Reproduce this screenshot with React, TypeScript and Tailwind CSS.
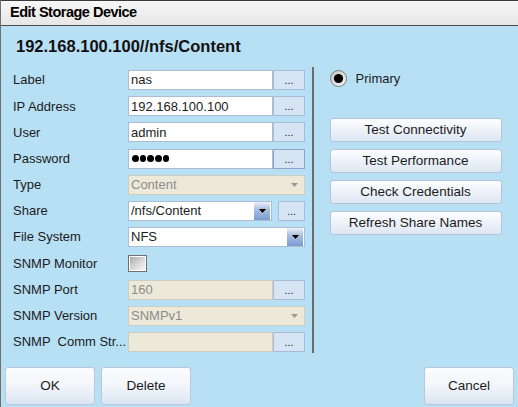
import React from 'react';

const FONT = "font-['Liberation_Sans',Arial,sans-serif]";

function Dots({ wide = 32, dark = false }: { wide?: number; dark?: boolean }) {
  return (
    <div
      className={`h-[20px] shrink-0 flex items-end justify-center pb-[3px] border bg-[#d7e4f3] text-[11px] leading-none text-[#222] ${
        dark ? 'border-[#8fa4c4]' : 'border-[#a9bbd6]'
      }`}
      style={{ width: wide }}
    >
      ...
    </div>
  );
}

function Arrow({ disabled = false }: { disabled?: boolean }) {
  if (disabled) {
    return (
      <svg width="7" height="4" viewBox="0 0 7 4" className="mr-[6px]">
        <path d="M0 0h7L3.5 4z" fill="#9a9a9a" />
      </svg>
    );
  }
  return (
    <div className="w-[16px] h-[18px] shrink-0 mr-px flex items-center justify-center bg-gradient-to-b from-[#edf2fa] via-[#a7bfe2] via-40% to-[#7b9dd2]">
      <svg width="9" height="6" viewBox="0 0 9 6">
        <path d="M0 0.5h9L4.5 5.5z" fill="#000" stroke="#fff" strokeWidth="0.6" />
      </svg>
    </div>
  );
}

function Row({ label, children }: { label: string; children: React.ReactNode }) {
  return (
    <div className="h-[26.2px] flex items-center">
      <div className="w-[115px] shrink-0 text-[13px] text-[#1b1b1b] whitespace-pre">{label}</div>
      <div className="flex items-center">{children}</div>
    </div>
  );
}

function TextBox({ value, disabled = false, width = 145 }: { value?: React.ReactNode; disabled?: boolean; width?: number }) {
  return (
    <div
      className={`h-[20px] shrink-0 flex items-center px-[2px] text-[13px] border ${
        disabled ? 'bg-[#ece9d9] border-[#cfcdc3] text-[#8c8c8c]' : 'bg-white border-[#abbcd4] text-[#1b1b1b]'
      }`}
      style={{ width }}
    >
      {value}
    </div>
  );
}

function Combo({ value, disabled = false, width }: { value: string; disabled?: boolean; width: number }) {
  return (
    <div
      className={`h-[20px] shrink-0 flex items-center justify-between pl-[2px] text-[13px] border ${
        disabled ? 'bg-[#ece9d9] border-[#cfcdc3] text-[#8c8c8c]' : 'bg-white border-[#abbcd4] text-[#1b1b1b]'
      }`}
      style={{ width }}
    >
      <span>{value}</span>
      <Arrow disabled={disabled} />
    </div>
  );
}

function SideButton({ children }: { children: string }) {
  return (
    <button className="h-[24px] w-[172px] rounded-[3px] border border-[#b7c4d8] bg-gradient-to-b from-[#fdfeff] to-[#dde6f3] text-[13.5px] text-[#1b1b1b]">
      {children}
    </button>
  );
}

function BigButton({ children }: { children: string }) {
  return (
    <button className="h-[38px] w-[90px] rounded-[3px] border border-[#bcc6d6] bg-gradient-to-b from-[#fbfcfe] via-[#f2f5fa] to-[#dbe5f3] text-[13.5px] text-[#1b1b1b]">
      {children}
    </button>
  );
}

export default function App() {
  return (
    <div className={`w-[518px] h-[407px] flex flex-col bg-[#b8e0f5] border-l border-[#6f6f6f] overflow-hidden ${FONT}`}>
      <div className="h-[26px] shrink-0 flex items-center pl-[9px] border-t border-t-[#3a3a3a] border-b border-b-[#4c4c4c] bg-gradient-to-b from-[#f7f7f7] to-[#e7e7e7] text-[14.5px] tracking-[-0.5px] font-bold text-black">
        Edit Storage Device
      </div>
      <div className="h-[41px] shrink-0 flex items-center pl-[15px] text-[16.5px] font-bold text-[#111]">
        192.168.100.100//nfs/Content
      </div>

      <div className="flex shrink-0">
        <div className="pl-[12px] w-[311px] shrink-0">
          <Row label="Label">
            <TextBox value="nas" />
            <Dots />
          </Row>
          <Row label="IP Address">
            <TextBox value="192.168.100.100" />
            <Dots />
          </Row>
          <Row label="User">
            <TextBox value="admin" />
            <Dots />
          </Row>
          <Row label="Password">
            <TextBox
              value={
                <span className="flex gap-[1.2px] pl-[1px]">
                  {[0, 1, 2, 3, 4].map((i) => (
                    <span key={i} className="w-[6.5px] h-[6.5px] rounded-full bg-black" />
                  ))}
                </span>
              }
            />
            <Dots dark />
          </Row>
          <Row label="Type">
            <Combo value="Content" disabled width={177} />
          </Row>
          <Row label="Share">
            <Combo value="/nfs/Content" width={144} />
            <div className="ml-[6px]">
              <Dots wide={27} />
            </div>
          </Row>
          <Row label="File System">
            <Combo value="NFS" width={177} />
          </Row>
          <Row label="SNMP Monitor">
            <div className="w-[19px] h-[17px] border border-[#6f6f6f] p-px bg-white">
              <div className="w-full h-full bg-gradient-to-br from-[#a9a9a9] via-[#d6d6d6] to-[#f6f6f6]" />
            </div>
          </Row>
          <Row label="SNMP Port">
            <TextBox value="160" disabled />
            <Dots />
          </Row>
          <Row label="SNMP Version">
            <Combo value="SNMPv1" disabled width={177} />
          </Row>
          <Row label="SNMP  Comm Str...">
            <TextBox disabled />
            <Dots />
          </Row>
        </div>

        <div className="w-[1.5px] h-[286px] bg-[#6c6c6c] shrink-0" />

        <div className="pl-[16px] pt-[3px] flex flex-col">
          <div className="flex items-center gap-[9px] h-[17px]">
            <svg width="17" height="17" viewBox="0 0 17 17">
              <defs>
                <linearGradient id="rg" x1="0" y1="0" x2="1" y2="1">
                  <stop offset="0" stopColor="#c4c4c4" />
                  <stop offset="1" stopColor="#f8f8f8" />
                </linearGradient>
              </defs>
              <circle cx="8.5" cy="8.5" r="8" fill="url(#rg)" stroke="#7a7a7a" strokeWidth="1" />
              <circle cx="8.5" cy="8.5" r="4.6" fill="#000" />
            </svg>
            <span className="text-[13px] text-[#1b1b1b]">Primary</span>
          </div>
          <div className="mt-[31px] flex flex-col gap-[7px]">
            <SideButton>Test Connectivity</SideButton>
            <SideButton>Test Performance</SideButton>
            <SideButton>Check Credentials</SideButton>
            <SideButton>Refresh Share Names</SideButton>
          </div>
        </div>
      </div>

      <div className="flex items-center pl-[4px] pr-[4px] mt-[12px] gap-[6px]">
        <BigButton>OK</BigButton>
        <BigButton>Delete</BigButton>
        <div className="ml-auto">
          <BigButton>Cancel</BigButton>
        </div>
      </div>
    </div>
  );
}
